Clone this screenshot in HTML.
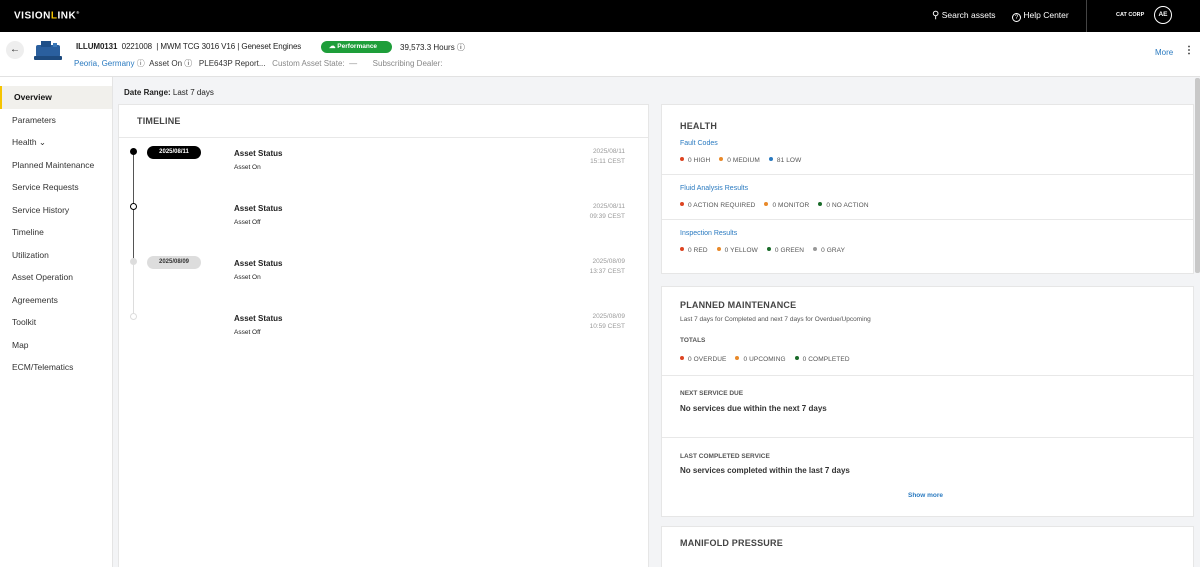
<!DOCTYPE html>
<html><head><style>
*{margin:0;padding:0;box-sizing:border-box}
html,body{width:1200px;height:567px;overflow:hidden}
body{font-family:"Liberation Sans",sans-serif;background:#f3f4f6;position:relative;color:#222}
.abs{position:absolute}
.top{left:0;top:0;width:1200px;height:32px;background:#000;color:#fff}
.hdr{left:0;top:32px;width:1200px;height:45px;background:#fff;border-bottom:1px solid #e2e2e2}
.side{left:0;top:77px;width:113px;height:490px;background:#fff;border-right:1px solid #e4e4e4}
.side div{height:22.5px;line-height:22.5px;padding-left:12px;font-size:8.5px;color:#333}
.card{background:#fff;border:1px solid #e6e6e6}
.dot{display:inline-block;width:4px;height:4px;border-radius:50%;margin-right:4px;vertical-align:1px}
.lg{font-size:6.5px;color:#555;letter-spacing:.1px}
.lg span{margin-right:9px}
.blue{color:#2a7ac0;font-size:7px}
.h{font-size:9px;font-weight:bold;color:#444;letter-spacing:.2px}
.sep{border-top:1px solid #e8e8e8}
.pill{width:54px;height:13px;border-radius:7px;font-size:6px;font-weight:bold;text-align:center;line-height:13px}
</style></head><body>
<div class="abs top">
 <div class="abs" style="left:14px;top:10px;font-size:10px;font-weight:bold;letter-spacing:.5px">VISION<span style="color:#f5c400">L</span>INK<sup style="font-size:4px">®</sup></div>
 <div class="abs" style="left:932px;top:10px;font-size:8.5px"><span style="font-size:10px">&#9906;</span> Search assets</div>
 <div class="abs" style="left:1012px;top:10px;font-size:8.5px"><span style="display:inline-block;width:9px;height:9px;border:1px solid #fff;border-radius:50%;font-size:6px;text-align:center;line-height:8px;vertical-align:-1px">?</span> Help Center</div>
 <div class="abs" style="left:1086px;top:0;width:1px;height:32px;background:#444"></div>
 <div class="abs" style="left:1116px;top:12px;font-size:5.5px;font-weight:bold">CAT CORP</div>
 <div class="abs" style="left:1154px;top:6px;width:18px;height:18px;border:1px solid #fff;border-radius:50%;font-size:6.5px;text-align:center;line-height:16px;font-weight:bold">AE</div>
</div>
<div class="abs hdr">
 <div class="abs" style="left:6px;top:9px;width:18px;height:18px;border-radius:50%;background:#eee;text-align:center;line-height:18px;font-size:10px">&#8592;</div>
 <svg class="abs" style="left:33px;top:7px" width="30" height="24" viewBox="0 0 30 24"><rect x="3" y="6" width="24" height="12" rx="2" fill="#2a5f9e"/><rect x="8" y="2" width="10" height="6" fill="#1f4f88"/><rect x="1" y="17" width="28" height="4" rx="1" fill="#1d4a7e"/><rect x="20" y="4" width="4" height="4" fill="#3b78b8"/></svg>
 <div class="abs" style="left:76px;top:10px;font-size:8px;letter-spacing:-.1px;white-space:nowrap"><b>ILLUM0131</b>&nbsp; 0221008 &nbsp;| MWM TCG 3016 V16 | Geneset Engines</div>
 <div class="abs" style="left:321px;top:9px;width:71px;height:12px;border-radius:6px;background:#1e9e3a;color:#fff;font-size:6.5px;font-weight:bold;line-height:12px;padding-left:8px">&#9729; Performance</div>
 <div class="abs" style="left:400px;top:10px;font-size:8px">39,573.3 Hours ⓘ</div>
 <div class="abs" style="left:74px;top:26px;font-size:8px;color:#555;white-space:nowrap"><span style="color:#2a7ac0">Peoria, Germany</span> ⓘ &nbsp;<span style="color:#333">Asset On ⓘ &nbsp; PLE643P Report...</span> &nbsp; <span style="color:#888">Custom Asset State: &nbsp;— &nbsp; &nbsp; &nbsp; Subscribing Dealer:</span></div>
 <div class="abs" style="left:1155px;top:16px;font-size:8px;color:#2a7ac0">More</div>
 <div class="abs" style="left:1184px;top:13px;font-size:10px;font-weight:bold">&#8942;</div>
</div>
<div class="abs side">
 <div style="margin-top:9px;background:#f1f0ec;border-left:2px solid #f5c400;font-weight:bold;color:#111">Overview</div>
 <div>Parameters</div><div>Health &#8964;</div><div>Planned Maintenance</div><div>Service Requests</div><div>Service History</div><div>Timeline</div><div>Utilization</div><div>Asset Operation</div><div>Agreements</div><div>Toolkit</div><div>Map</div><div>ECM/Telematics</div>
</div>
<div class="abs" style="left:124px;top:88px;font-size:8px"><b>Date Range:</b> Last 7 days</div>
<div class="abs card" style="left:118px;top:104px;width:531px;height:463px;border-bottom:0">
 <div class="abs h" style="left:18px;top:11px">TIMELINE</div>
 <div class="abs sep" style="left:0;top:32px;width:529px"></div>
 <div class="abs" style="left:14px;top:47px;width:1px;height:110px;background:#555"></div>
 <div class="abs" style="left:14px;top:157px;width:1px;height:55px;background:#ddd"></div>
 <div class="abs" style="left:11px;top:43px;width:7px;height:7px;border-radius:50%;background:#000"></div>
 <div class="abs" style="left:11px;top:98px;width:7px;height:7px;border-radius:50%;background:#fff;border:1.3px solid #000"></div>
 <div class="abs" style="left:11px;top:153px;width:7px;height:7px;border-radius:50%;background:#ddd"></div>
 <div class="abs" style="left:11px;top:208px;width:7px;height:7px;border-radius:50%;background:#fff;border:1px solid #ddd"></div>
 <div class="abs pill" style="left:28px;top:41px;background:#000;color:#fff">2025/08/11</div>
 <div class="abs pill" style="left:28px;top:151px;background:#ddd;color:#333">2025/08/09</div>
 <div class="abs" style="left:115px;top:42px;font-size:8px;font-weight:bold;line-height:13px">Asset Status<br><span style="font-size:6.5px;font-weight:normal">Asset On</span></div>
 <div class="abs" style="left:115px;top:97px;font-size:8px;font-weight:bold;line-height:13px">Asset Status<br><span style="font-size:6.5px;font-weight:normal">Asset Off</span></div>
 <div class="abs" style="left:115px;top:152px;font-size:8px;font-weight:bold;line-height:13px">Asset Status<br><span style="font-size:6.5px;font-weight:normal">Asset On</span></div>
 <div class="abs" style="left:115px;top:207px;font-size:8px;font-weight:bold;line-height:13px">Asset Status<br><span style="font-size:6.5px;font-weight:normal">Asset Off</span></div>
 <div class="abs" style="left:440px;top:42px;width:66px;text-align:right;font-size:6.5px;color:#999;line-height:10px">2025/08/11<br>15:11 CEST</div>
 <div class="abs" style="left:440px;top:97px;width:66px;text-align:right;font-size:6.5px;color:#999;line-height:10px">2025/08/11<br>09:39 CEST</div>
 <div class="abs" style="left:440px;top:152px;width:66px;text-align:right;font-size:6.5px;color:#999;line-height:10px">2025/08/09<br>13:37 CEST</div>
 <div class="abs" style="left:440px;top:207px;width:66px;text-align:right;font-size:6.5px;color:#999;line-height:10px">2025/08/09<br>10:59 CEST</div>
</div>
<div class="abs card" style="left:661px;top:104px;width:533px;height:170px">
 <div class="abs h" style="left:18px;top:16px">HEALTH</div>
 <div class="abs blue" style="left:18px;top:35px">Fault Codes</div>
 <div class="abs lg" style="left:18px;top:52px"><span><i class="dot" style="background:#d42"></i>0 HIGH</span><span><i class="dot" style="background:#e8892a"></i>0 MEDIUM</span><span><i class="dot" style="background:#2a7ac0"></i>81 LOW</span></div>
 <div class="abs sep" style="left:0;top:69px;width:531px"></div>
 <div class="abs blue" style="left:18px;top:80px">Fluid Analysis Results</div>
 <div class="abs lg" style="left:18px;top:97px"><span><i class="dot" style="background:#d42"></i>0 ACTION REQUIRED</span><span><i class="dot" style="background:#e8892a"></i>0 MONITOR</span><span><i class="dot" style="background:#1a6b2a"></i>0 NO ACTION</span></div>
 <div class="abs sep" style="left:0;top:114px;width:531px"></div>
 <div class="abs blue" style="left:18px;top:125px">Inspection Results</div>
 <div class="abs lg" style="left:18px;top:142px"><span><i class="dot" style="background:#d42"></i>0 RED</span><span><i class="dot" style="background:#e8892a"></i>0 YELLOW</span><span><i class="dot" style="background:#1a6b2a"></i>0 GREEN</span><span><i class="dot" style="background:#999"></i>0 GRAY</span></div>
</div>
<div class="abs card" style="left:661px;top:286px;width:533px;height:231px">
 <div class="abs h" style="left:18px;top:13px">PLANNED MAINTENANCE</div>
 <div class="abs" style="left:18px;top:29px;font-size:6.5px;color:#555">Last 7 days for Completed and next 7 days for Overdue/Upcoming</div>
 <div class="abs" style="left:18px;top:50px;font-size:6.5px;font-weight:bold;color:#555">TOTALS</div>
 <div class="abs lg" style="left:18px;top:69px"><span><i class="dot" style="background:#d42"></i>0 OVERDUE</span><span><i class="dot" style="background:#e8892a"></i>0 UPCOMING</span><span><i class="dot" style="background:#1a6b2a"></i>0 COMPLETED</span></div>
 <div class="abs sep" style="left:0;top:88px;width:531px"></div>
 <div class="abs" style="left:18px;top:103px;font-size:6.5px;font-weight:bold;color:#555">NEXT SERVICE DUE</div>
 <div class="abs" style="left:18px;top:117px;font-size:8px;font-weight:bold;color:#333">No services due within the next 7 days</div>
 <div class="abs sep" style="left:0;top:150px;width:531px"></div>
 <div class="abs" style="left:18px;top:166px;font-size:6.5px;font-weight:bold;color:#555">LAST COMPLETED SERVICE</div>
 <div class="abs" style="left:18px;top:179px;font-size:8px;font-weight:bold;color:#333">No services completed within the last 7 days</div>
 <div class="abs" style="left:246px;top:205px;font-size:6.5px;color:#2a7ac0;font-weight:bold">Show more</div>
</div>
<div class="abs card" style="left:661px;top:526px;width:533px;height:41px;border-bottom:0">
 <div class="abs h" style="left:18px;top:11px">MANIFOLD PRESSURE</div>
</div>
<div class="abs" style="left:1195px;top:78px;width:5px;height:195px;background:#c8c8c8;border-radius:2px"></div>
</body></html>
